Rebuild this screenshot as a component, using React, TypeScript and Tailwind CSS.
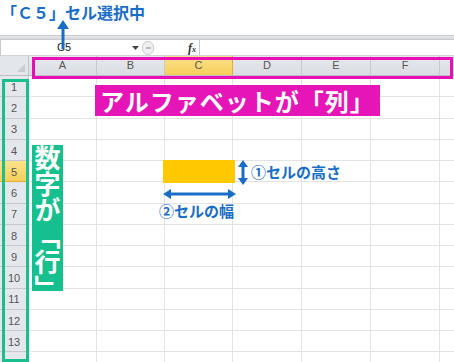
import React from "react";

const cols = [
  { name: "A", w: 68 },
  { name: "B", w: 68 },
  { name: "C", w: 68 },
  { name: "D", w: 69 },
  { name: "E", w: 69 },
  { name: "F", w: 69 },
  { name: "", w: 40 },
];

const rows = Array.from({ length: 13 }, (_, i) => i + 1);

const jp = "font-['Noto_Sans_CJK_JP','Noto_Sans',sans-serif]";

function HeaderRow() {
  return (
    <div className="flex h-[20px] border-b border-[#b9bec6]">
      <div className="relative w-[29px] shrink-0 bg-[#e3e6ea] border-r border-[#c3c7cc]">
        <svg className="absolute right-[3px] bottom-[3px]" width="8" height="8" viewBox="0 0 8 8">
          <polygon points="8,0 8,8 0,8" fill="#c9ccd1" />
        </svg>
      </div>
      {cols.map((c, i) => (
        <div
          key={i}
          style={{ width: c.w }}
          className={
            c.name === "C"
              ? "shrink-0 flex items-center justify-center border-r border-[#e2ac37] bg-gradient-to-b from-[#fbe38a] to-[#f6cf5a] text-[11px] text-[#555] font-['Liberation_Sans',sans-serif]"
              : "shrink-0 flex items-center justify-center border-r border-[#c6cad0] bg-gradient-to-b from-[#e6e9ed] to-[#dadde2] text-[11px] text-[#555] font-['Liberation_Sans',sans-serif]"
          }
        >
          {c.name}
        </div>
      ))}
    </div>
  );
}

function GridRow({ n, label = true }: { n: number; label?: boolean }) {
  const sel = n === 5;
  return (
    <div className="flex h-[21.25px]">
      <div
        className={
          sel
            ? "w-[29px] shrink-0 flex items-end justify-center pb-[1px] bg-gradient-to-b from-[#fbe38a] to-[#f6cf5a] border-r border-b border-[#e2ac37] text-[11px] text-[#555] font-['Liberation_Sans',sans-serif]"
            : "w-[29px] shrink-0 flex items-end justify-center pb-[1px] bg-[#e4e7eb] border-r border-b border-[#c6cad0] text-[11px] text-[#555] font-['Liberation_Sans',sans-serif]"
        }
      >
        {label ? n : null}
      </div>
      {cols.map((c, i) => (
        <div key={i} style={{ width: c.w }} className="shrink-0 border-r border-b border-[#e3e3e3]" />
      ))}
    </div>
  );
}

export default function App() {
  return (
    <div className="relative w-[454px] h-[362px] overflow-hidden bg-white">
      {/* title */}
      <div className={`h-[35px] pl-[1px] pt-[2px] text-[16px] font-bold leading-[20px] text-[#1a6dc6] ${jp}`}>
        「Ｃ５」セル選択中
      </div>

      {/* toolbar edge */}
      <div className="h-[5px] border-t border-[#c9cbcf] bg-gradient-to-b from-[#e9eaec] to-[#d4d6da] border-b border-[#b8bbc0]" />

      {/* formula bar */}
      <div className="flex h-[16px] border-b border-[#d0d3d8] text-[11px] font-['Liberation_Sans',sans-serif] text-[#222]">
        <div className="relative w-[140px] shrink-0 flex items-center pl-[56px] border-l border-[#c8cbd0]">
          C5
          <svg className="absolute left-[131px] top-[6px]" width="7" height="4" viewBox="0 0 7 4">
            <polygon points="0,0 7,0 3.5,4" fill="#444" />
          </svg>
        </div>
        <div className="w-[60px] shrink-0 flex items-center border-r border-[#c8cbd0]">
          <div className="ml-[2px] w-[12px] h-[14px] rounded-full border border-[#c9ccd1] bg-[#eef0f2] flex items-center justify-center">
            <div className="w-[5px] h-[2px] bg-[#b8bcc2]" />
          </div>
          <div className="ml-auto mr-[3px] italic font-['Liberation_Serif',serif] text-[12px] font-bold text-[#333]">
            f<span className="text-[8px]">x</span>
          </div>
        </div>
        <div className="flex-1" />
      </div>

      {/* sheet */}
      <HeaderRow />
      {rows.map((n) => (
        <GridRow key={n} n={n} />
      ))}
      <GridRow n={14} label={false} />

      {/* selected cell */}
      <div className="absolute left-[163px] top-[160px] w-[72px] h-[23px] bg-[#ffc800]" />

      {/* pointer arrow to name box */}
      <svg className="absolute left-[57px] top-[20px]" width="12" height="29" viewBox="0 0 12 29">
        <polygon points="6,0 12,9 0,9" fill="#1a6dc6" />
        <rect x="4.5" y="8" width="3" height="21" fill="#1a6dc6" />
      </svg>

      {/* column frame */}
      <div className="absolute left-[32px] top-[57px] w-[421px] h-[22px] border-[3px] border-[#ea0fb4]" />
      <div
        className={`absolute left-[95px] top-[85px] h-[31px] w-[285px] flex items-center justify-center bg-[#e615b8] text-white text-[24px] font-bold tracking-[1px] ${jp}`}
      >
        アルファベットが「列」
      </div>

      {/* row frame */}
      <div className="absolute left-[2px] top-[79px] w-[27px] h-[283px] border-[3px] border-[#19c08d]" />
      <div
        className={`absolute left-[32px] top-[145px] w-[31px] h-[146px] flex items-center justify-center bg-[#16c08e] text-white text-[26px] font-bold leading-[31px] [writing-mode:vertical-rl] ${jp}`}
      >
        数字が「行」
      </div>

      {/* height annotation */}
      <svg className="absolute left-[238px] top-[160px]" width="10" height="25" viewBox="0 0 10 25">
        <polygon points="5,0 10,7 0,7" fill="#1a6dc6" />
        <rect x="3.5" y="6" width="3" height="13" fill="#1a6dc6" />
        <polygon points="5,25 10,18 0,18" fill="#1a6dc6" />
      </svg>
      <div className={`absolute left-[251px] top-[162px] text-[15px] font-bold leading-[20px] text-[#1a6dc6] ${jp}`}>
        ①セルの高さ
      </div>

      {/* width annotation */}
      <svg className="absolute left-[163px] top-[189px]" width="73" height="10" viewBox="0 0 73 10">
        <polygon points="0,5 8,0 8,10" fill="#1a6dc6" />
        <rect x="7" y="3.5" width="59" height="3" fill="#1a6dc6" />
        <polygon points="73,5 65,0 65,10" fill="#1a6dc6" />
      </svg>
      <div className={`absolute left-[159px] top-[201px] text-[15px] font-bold leading-[20px] text-[#1a6dc6] ${jp}`}>
        ②セルの幅
      </div>
    </div>
  );
}
